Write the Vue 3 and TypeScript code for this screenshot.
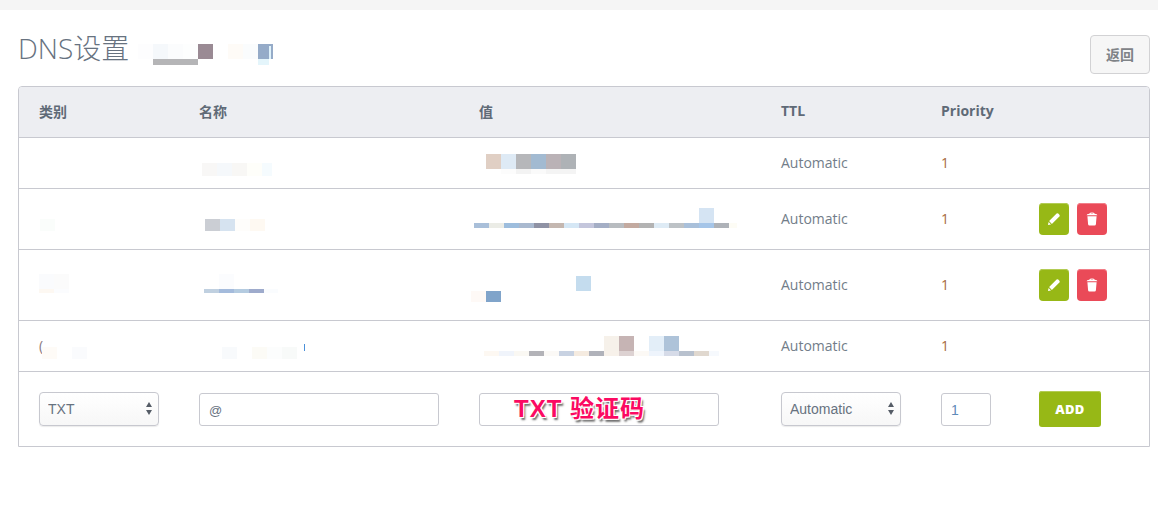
<script setup lang="ts">
interface Blur { x: number; y: number; w: number; h: number; c: string }

const row = (x: number, y: number, h: number, colors: string[], w = 15): Blur[] =>
  colors.map((c, i) => ({ x: x + i * w, y, w, h, c }))

const blurs: Blur[] = [
  // title
  { x: 138, y: 44, w: 15, h: 15, c: '#fdfdfe' },
  ...row(153, 44, 15, ['#f5f8fb', '#fbfcfd', '#fdfefe', '#9a8a94']),
  ...row(153, 59, 6, ['#b5b5b7', '#b5b5b7', '#b5b5b7']),
  ...row(228, 44, 15, ['#fefbf7', '#fafcfd', '#95abc8']),
  { x: 258, y: 59, w: 11, h: 6, c: '#e4f5fb' },
  { x: 269, y: 46, w: 2, h: 13, c: '#dff2fa' },
  // row 1
  ...row(202, 163, 13, ['#f8f7f6', '#f5f8fb', '#f8f7f5', '#fefefa']),
  { x: 262, y: 163, w: 10, h: 13, c: '#f5fbfe' },
  ...row(486, 154, 15, ['#e0cfc4', '#deeaf5', '#b6b7ba', '#a2bad1', '#bab2b6', '#aeb2b6']),
  ...row(501, 169, 5, ['#fcfcfc', '#f3f3f3', '#fafafa', '#f4f4f4', '#f4f4f4']),
  // row 2
  { x: 40, y: 219, w: 15, h: 12, c: '#fafdfb' },
  ...row(205, 219, 12, ['#cbced4', '#d6e3f0', '#fefdfb', '#fef9f2']),
  { x: 699, y: 208, w: 15, h: 15, c: '#d5e4f3' },
  ...row(474, 223, 5, [
    '#a9bfd9', '#ebece6', '#9dbddd', '#a9b9cf', '#8f92a4', '#c4b7b0', '#d5e7f5', '#c4c6dc', '#a4aec5',
    '#b8bcc0', '#c3aaa0', '#b3b3b3', '#deebf5', '#bdc2c6', '#a9c0da', '#a5c5e8', '#aeb2b8',
  ]),
  { x: 729, y: 223, w: 8, h: 5, c: '#fdfcf5' },
  // row 3
  ...row(39, 274, 15, ['#fafbfd', '#fbfbfb']),
  ...row(39, 289, 4, ['#fdf8f2', '#fbfcfe']),
  { x: 219, y: 274, w: 15, h: 15, c: '#fbfcfe' },
  ...row(204, 289, 4, ['#c0d0e0', '#a4bbdc', '#b4cbe0', '#9eabcc']),
  { x: 264, y: 289, w: 14, h: 4, c: '#fafcfe' },
  { x: 576, y: 276, w: 15, h: 15, c: '#c4dcee' },
  ...row(471, 291, 11, ['#fef9f6', '#80a4ca']),
  // row 4
  ...row(42, 347, 12, ['#fefbf7']),
  ...row(72, 347, 12, ['#fafbfd']),
  ...row(222, 347, 12, ['#f8fafc']),
  ...row(252, 347, 12, ['#fcfbf6', '#fcfdfd', '#f8faf9']),
  { x: 304, y: 344, w: 1, h: 7, c: '#4a90d9' },
  ...row(604, 336, 15, ['#f6f1ea', '#c6b4b4']),
  ...row(649, 336, 15, ['#e3eef8', '#aec3d9']),
  ...row(484, 351, 5, [
    '#fdf8f2', '#f0f4fb', '#faf8f3', '#b3b3b8', '#fbf9f6', '#c8d2e2', '#f5ebe0', '#b0b2ba',
    '#f7f1ea', '#ddd2d2', '#fcf9f5', '#eef4fc', '#d6dbe8', '#b8c1ce', '#e0d8cf',
  ]),
  { x: 709, y: 351, w: 10, h: 5, c: '#f6f9fd' },
]

const blurStyle = (b: Blur) => ({
  left: `${b.x}px`,
  top: `${b.y}px`,
  width: `${b.w}px`,
  height: `${b.h}px`,
  background: b.c,
})

const records = [
  { h: 'r50', actions: false, type: '' },
  { h: 'r60', actions: true, type: '' },
  { h: 'r70', actions: true, type: '' },
  { h: 'r50', actions: false, type: '(' },
]
</script>

<template>
  <div class="page">
    <div class="topbar"></div>
    <header class="head">
      <h1 class="title">DNS设置</h1>
      <button class="back" type="button">返回</button>
    </header>

    <div class="panel">
      <table class="table">
        <colgroup>
          <col class="c1" /><col class="c2" /><col class="c3" /><col class="c4" /><col class="c5" /><col />
        </colgroup>
        <thead>
          <tr>
            <th>类别</th>
            <th>名称</th>
            <th>值</th>
            <th>TTL</th>
            <th>Priority</th>
            <th></th>
          </tr>
        </thead>
        <tbody>
          <tr v-for="(r, i) in records" :key="i" :class="r.h">
            <td class="type">{{ r.type }}</td>
            <td></td>
            <td></td>
            <td class="ttl">Automatic</td>
            <td class="prio">1</td>
            <td>
              <div v-if="r.actions" class="actions">
                <button class="icon-btn green" type="button" aria-label="edit">
                  <svg width="14" height="14" viewBox="0 0 14 14">
                    <path fill="#fff" d="M9.6 1.6 Q10.4 .9 11.2 1.6 L12.4 2.8 Q13.1 3.6 12.4 4.4 L4.9 11.9 2.1 9.1Z" />
                    <path fill="#fff" d="M1.6 10 4 12.4 1 13Z" />
                  </svg>
                </button>
                <button class="icon-btn red" type="button" aria-label="delete">
                  <svg width="12" height="14" viewBox="0 0 12 14">
                    <path fill="#fff" d="M1.4 4.2H10.6L9.9 12.2Q9.8 13.4 8.6 13.4H3.4Q2.2 13.4 2.1 12.2Z" />
                    <path fill="#fff" d="M.6 3.3Q.6 1.9 3.2 1.7 3.8 .6 6 .6T8.8 1.7Q11.4 1.9 11.4 3.3Z" />
                    <path fill="#ea4a58" d="M4.4 1.9Q4.8 1.4 6 1.4T7.6 1.9Z" />
                  </svg>
                </button>
              </div>
            </td>
          </tr>
          <tr class="form-row">
            <td>
              <div class="select w120">
                <select><option>TXT</option></select>
                <span class="arrows"></span>
              </div>
            </td>
            <td><input class="field w240" type="text" value="@" /></td>
            <td><input class="field w240" type="text" /></td>
            <td>
              <div class="select w120">
                <select><option>Automatic</option></select>
                <span class="arrows"></span>
              </div>
            </td>
            <td><input class="field w50 num" type="text" value="1" /></td>
            <td><button class="add" type="button">ADD</button></td>
          </tr>
        </tbody>
      </table>
    </div>

    <i v-for="(b, i) in blurs" :key="i" class="blur" :style="blurStyle(b)"></i>
    <span class="note">TXT 验证码</span>
  </div>
</template>

<style scoped>
.page {
  position: relative;
  height: 507px;
  overflow: hidden;
  background: #fff;
  font-family: "Open Sans", "Noto Sans CJK SC", sans-serif;
  color: #67727f;
}
.topbar {
  height: 10px;
  background: #f5f5f5;
}
.head {
  display: flex;
  justify-content: space-between;
  align-items: flex-start;
  height: 76px;
  box-sizing: border-box;
  padding: 25px 8px 0 18px;
}
.title {
  margin: -2px 0 0;
  font-size: 28px;
  line-height: 30px;
  font-weight: 300;
  color: #67727f;
}
.back {
  width: 60px;
  height: 39px;
  padding: 0 0 2px;
  border: 1px solid #d2d2d4;
  border-radius: 4px;
  background: #f6f6f6;
  color: #7f8387;
  font: 700 14px "Open Sans", "Noto Sans CJK SC", sans-serif;
}
.panel {
  margin: 0 8px 0 18px;
  border: 1px solid #c8c9d0;
  border-radius: 4px 4px 0 0;
  overflow: hidden;
}
.table {
  width: 100%;
  table-layout: fixed;
  border-collapse: collapse;
}
.c1 { width: 160px; }
.c2 { width: 280px; }
.c3 { width: 302px; }
.c4 { width: 160px; }
.c5 { width: 98px; }
th {
  height: 50px;
  padding: 0 0 2px 20px;
  box-sizing: border-box;
  background: #edeef2;
  border-bottom: 1px solid #c8c9d0;
  text-align: left;
  font-size: 14px;
  font-weight: 700;
  color: #5f6a77;
}
td {
  padding: 0 0 0 20px;
  border-bottom: 1px solid #c8c9d0;
  font-size: 14px;
  vertical-align: middle;
}
.r50 td { height: 50px; }
.r60 td { height: 60px; }
.r70 td { height: 70px; }
.form-row td {
  height: 74px;
  border-bottom: 0;
}
.type { color: #8a7a80; }
.ttl { color: #727d89; }
.prio { color: #a86a3c; }
.actions {
  display: flex;
  gap: 8px;
}
.icon-btn {
  display: flex;
  align-items: center;
  justify-content: center;
  width: 30px;
  height: 32px;
  padding: 0;
  border: 0;
  border-radius: 4px;
}
.green {
  background: #97b816;
  box-shadow: inset 0 1px 0 #b3cc55;
}
.red {
  background: #ea4a58;
  box-shadow: inset 0 1px 0 #f27f89;
}
.select {
  position: relative;
}
.select select {
  display: block;
  width: 100%;
  height: 34px;
  padding: 0 0 0 8px;
  appearance: none;
  border: 1px solid #c7c8cf;
  border-radius: 4px;
  background: linear-gradient(#fff, #f7f7f7);
  box-shadow: 0 1px 1px rgba(0, 0, 0, 0.08);
  color: #67727f;
  font: 14px "Liberation Sans", sans-serif;
}
.arrows {
  position: absolute;
  right: 7px;
  top: 10px;
  width: 0;
  height: 0;
  border-left: 3.5px solid transparent;
  border-right: 3.5px solid transparent;
  border-bottom: 5px solid #555c66;
}
.arrows::after {
  content: "";
  position: absolute;
  left: -3.5px;
  top: 8px;
  border-left: 3.5px solid transparent;
  border-right: 3.5px solid transparent;
  border-top: 5px solid #555c66;
}
.w120 { width: 120px; }
.field {
  display: block;
  box-sizing: border-box;
  height: 33px;
  margin-top: 1px;
  padding: 2px 9px 0;
  border: 1px solid #c8c9d0;
  border-radius: 3px;
  background: #fff;
  color: #67727f;
  font: 13px "Liberation Sans", sans-serif;
}
.w240 { width: 240px; }
.w50 { width: 50px; }
.num {
  color: #5f8bb8;
  font-size: 14px;
}
.add {
  display: block;
  width: 62px;
  height: 36px;
  padding: 0;
  border: 0;
  border-radius: 3px;
  background: #97b816;
  box-shadow: inset 0 1px 0 #b3cc55;
  color: #fff;
  font: 800 13px "Open Sans", sans-serif;
  letter-spacing: 0.3px;
}
.blur {
  position: absolute;
  display: block;
}
.note {
  position: absolute;
  left: 514px;
  top: 394px;
  font: 700 24px/30px "Liberation Sans", "Noto Sans CJK SC", sans-serif;
  letter-spacing: 1px;
  color: #fb0a62;
  white-space: nowrap;
  text-shadow:
    -1px -1px 0 #fff, 1px -1px 0 #fff, -1px 1px 0 #fff, 1px 1px 0 #fff,
    2px 3px 2px rgba(0, 0, 0, 0.6);
}
</style>
